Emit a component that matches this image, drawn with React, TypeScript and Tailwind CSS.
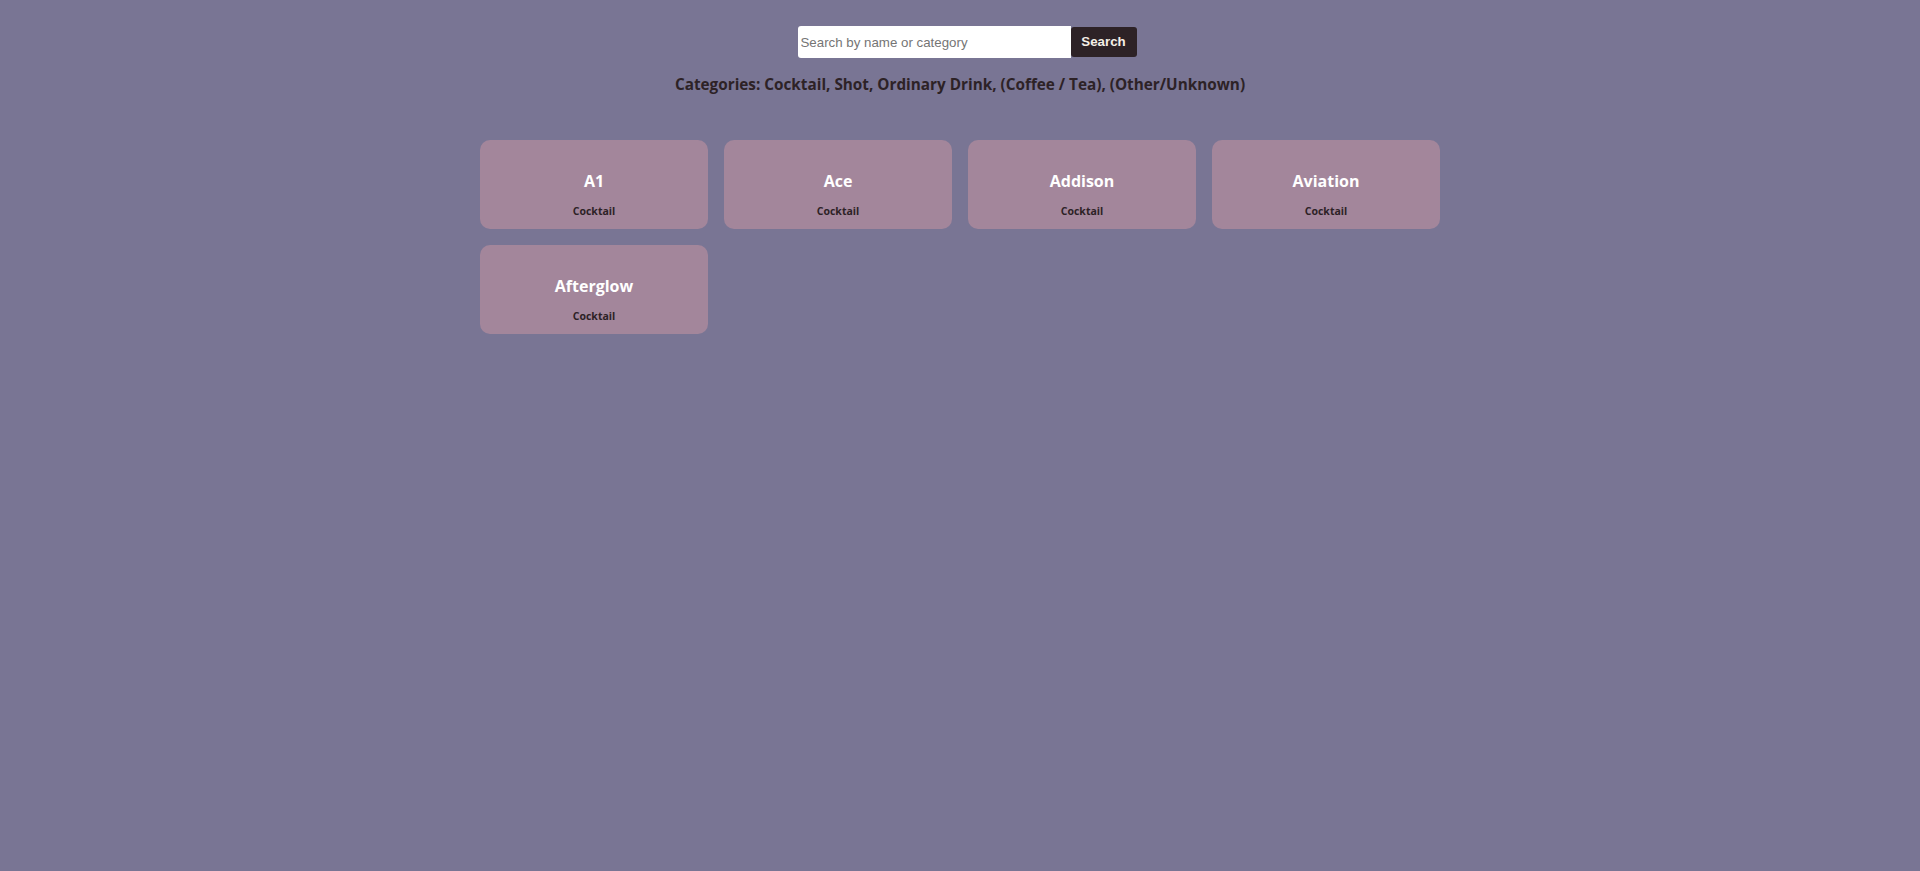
import React from 'react';

const drinks = [
  { name: 'A1', category: 'Cocktail' },
  { name: 'Ace', category: 'Cocktail' },
  { name: 'Addison', category: 'Cocktail' },
  { name: 'Aviation', category: 'Cocktail' },
  { name: 'Afterglow', category: 'Cocktail' },
];

const DrinkCard = ({ name, category }: { name: string; category: string }) => (
  <div className="flex h-[89px] flex-col items-center rounded-[10px] bg-[#a3869b] pt-[30px]">
    <h3 className="text-[16px] font-bold leading-[22px] text-white">{name}</h3>
    <p className="mt-[12px] text-[10.5px] font-bold leading-[14px] text-[#2d2226]">{category}</p>
  </div>
);

export default function App() {
  return (
    <div
      className="min-h-screen bg-[#797594] pt-[26px]"
      style={{ fontFamily: '"Open Sans", "Noto Sans", sans-serif' }}
    >
      <form
        className="flex justify-center pl-[14px]"
        onSubmit={(e) => e.preventDefault()}
      >
        <input
          type="text"
          placeholder="Search by name or category"
          className="h-[32px] w-[273px] rounded-l-[3px] bg-white px-[3px] text-[13.3px] text-black outline-none placeholder:text-[#757575]"
          style={{ fontFamily: '"Liberation Sans", Arial, sans-serif' }}
        />
        <button
          type="submit"
          className="my-[1px] h-[30px] w-[66px] rounded-[3px] bg-[#2d2226] text-[13.3px] font-bold text-[#f5efe6]"
          style={{ fontFamily: '"Liberation Sans", Arial, sans-serif' }}
        >
          Search
        </button>
      </form>

      <p className="mt-[15px] text-center text-[15.3px] font-bold leading-[22px] text-[#2d2226]">
        Categories: Cocktail, Shot, Ordinary Drink, (Coffee / Tea), (Other/Unknown)
      </p>

      <div className="mx-auto mt-[45px] grid w-[960px] grid-cols-4 gap-4">
        {drinks.map((d) => (
          <DrinkCard key={d.name} name={d.name} category={d.category} />
        ))}
      </div>
    </div>
  );
}
